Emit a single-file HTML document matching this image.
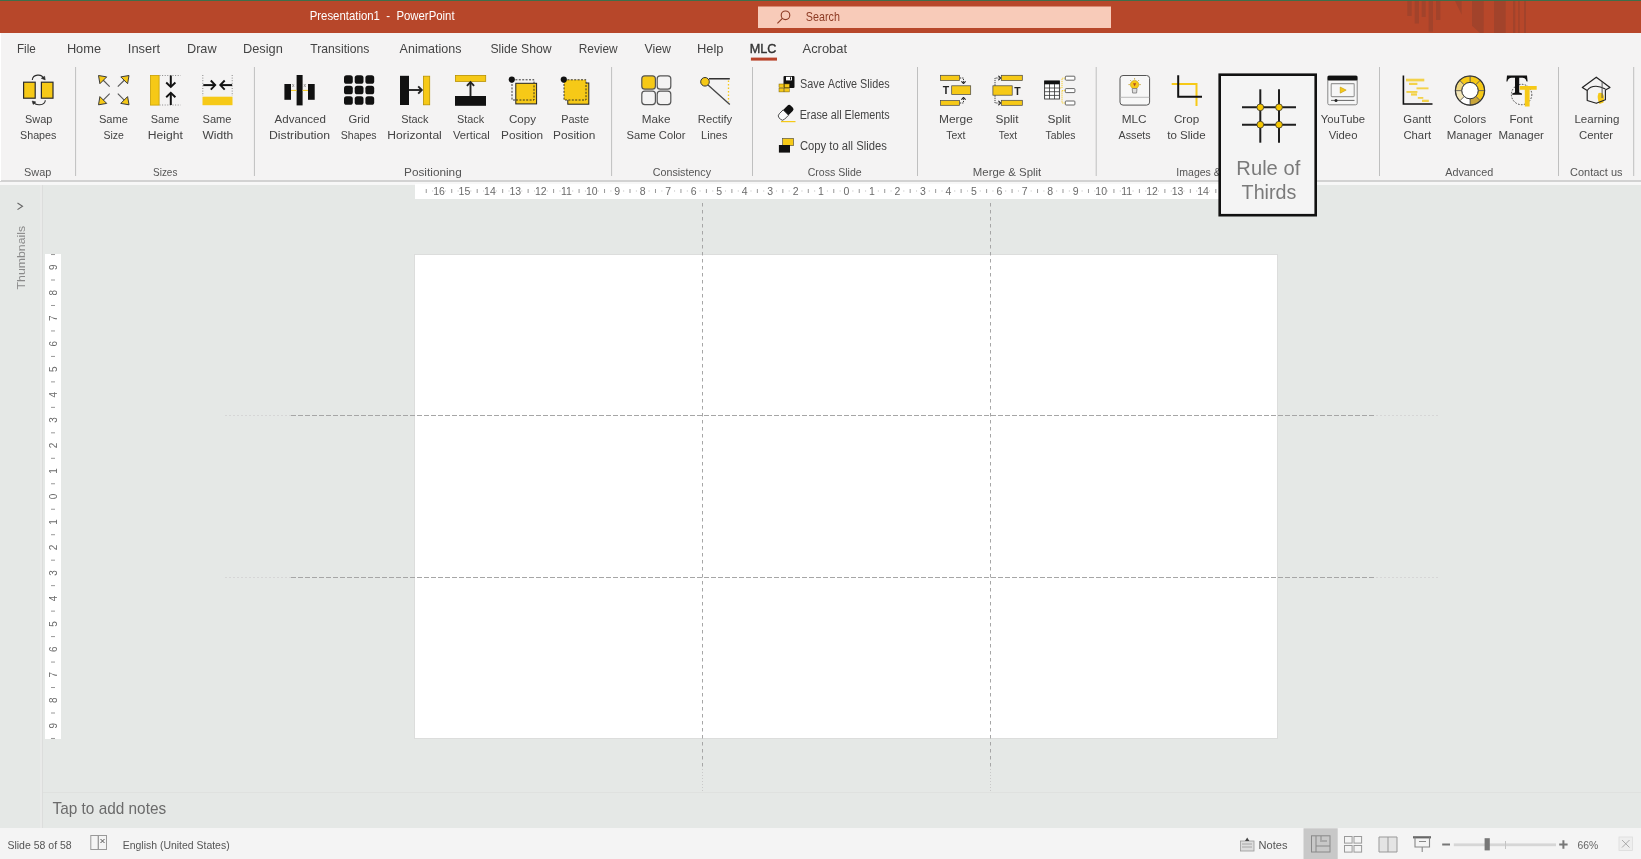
<!DOCTYPE html>
<html><head><meta charset="utf-8"><style>
html,body{margin:0;padding:0;width:1641px;height:859px;overflow:hidden;background:#e6e7e6;}
svg{display:block;font-family:"Liberation Sans",sans-serif;will-change:transform;}
</style></head><body>
<svg width="1641" height="859" viewBox="0 0 1641 859">
<rect x="0" y="0" width="1641" height="1" fill="#3d6e4a"/>
<rect x="0" y="1" width="1641" height="32" fill="#b7472a"/>
<rect x="1407.3" y="1" width="4.4" height="15" fill="#a2432b"/>
<rect x="1414.7" y="1" width="4.3" height="22.5" fill="#a2432b"/>
<rect x="1421.7" y="1" width="4" height="16" fill="#a2432b"/>
<rect x="1428.6" y="1" width="4.4" height="30.6" fill="#a2432b"/>
<rect x="1436" y="1" width="4.4" height="19" fill="#a2432b"/>
<rect x="1494" y="1" width="11.7" height="32" fill="#a2432b"/>
<rect x="1513" y="1" width="2.3" height="32" fill="#a2432b"/>
<rect x="1518.2" y="1" width="1.5" height="32" fill="#a2432b"/>
<rect x="1524" y="1" width="2" height="32" fill="#a2432b"/>
<path d="M1455,1 L1461.7,1 L1461.7,14.7 Z" fill="#a2432b"/>
<path d="M1472,1 L1483.7,1 L1483.7,33 L1480,33 L1472,25.7 Z" fill="#a2432b"/>
<text x="309.69" y="20.30" font-size="12.8" fill="#ffffff" textLength="144.92" lengthAdjust="spacingAndGlyphs" font-family="Liberation Sans" font-weight="normal" >Presentation1&#160;&#160;-&#160;&#160;PowerPoint</text>
<rect x="758" y="6.5" width="353" height="21.5" fill="#f8cbb9"/>
<circle cx="785.5" cy="15.3" r="4.3" fill="none" stroke="#8d3b24" stroke-width="1.1"/>
<line x1="782.4" y1="18.4" x2="777.4" y2="23.4" stroke="#8d3b24" stroke-width="1.2"/>
<text x="805.82" y="20.80" font-size="12.2" fill="#8d3b24" textLength="34.07" lengthAdjust="spacingAndGlyphs" font-family="Liberation Sans" font-weight="normal" >Search</text>
<rect x="0" y="33" width="1641" height="148" fill="#f4f3f3"/>
<rect x="0" y="180" width="1641" height="2" fill="#d2d2d2"/>
<rect x="0" y="33" width="1" height="148" fill="#ffffff"/>
<text x="16.97" y="52.75" font-size="13.3" fill="#444" textLength="18.82" lengthAdjust="spacingAndGlyphs" font-family="Liberation Sans" font-weight="normal" >File</text>
<text x="66.88" y="52.75" font-size="13.3" fill="#444" textLength="34.17" lengthAdjust="spacingAndGlyphs" font-family="Liberation Sans" font-weight="normal" >Home</text>
<text x="127.84" y="52.75" font-size="13.3" fill="#444" textLength="32.24" lengthAdjust="spacingAndGlyphs" font-family="Liberation Sans" font-weight="normal" >Insert</text>
<text x="186.99" y="52.75" font-size="13.3" fill="#444" textLength="29.60" lengthAdjust="spacingAndGlyphs" font-family="Liberation Sans" font-weight="normal" >Draw</text>
<text x="242.98" y="52.75" font-size="13.3" fill="#444" textLength="39.83" lengthAdjust="spacingAndGlyphs" font-family="Liberation Sans" font-weight="normal" >Design</text>
<text x="310.26" y="52.75" font-size="13.3" fill="#444" textLength="59.15" lengthAdjust="spacingAndGlyphs" font-family="Liberation Sans" font-weight="normal" >Transitions</text>
<text x="399.60" y="52.75" font-size="13.3" fill="#444" textLength="61.86" lengthAdjust="spacingAndGlyphs" font-family="Liberation Sans" font-weight="normal" >Animations</text>
<text x="490.45" y="52.75" font-size="13.3" fill="#444" textLength="61.13" lengthAdjust="spacingAndGlyphs" font-family="Liberation Sans" font-weight="normal" >Slide&#160;Show</text>
<text x="578.75" y="52.75" font-size="13.3" fill="#444" textLength="38.94" lengthAdjust="spacingAndGlyphs" font-family="Liberation Sans" font-weight="normal" >Review</text>
<text x="644.54" y="52.75" font-size="13.3" fill="#444" textLength="26.46" lengthAdjust="spacingAndGlyphs" font-family="Liberation Sans" font-weight="normal" >View</text>
<text x="696.97" y="52.75" font-size="13.3" fill="#444" textLength="26.57" lengthAdjust="spacingAndGlyphs" font-family="Liberation Sans" font-weight="normal" >Help</text>
<text x="749.79" y="52.75" font-size="13.3" fill="#333" textLength="26.67" lengthAdjust="spacingAndGlyphs" font-family="Liberation Sans" font-weight="normal" stroke="#333" stroke-width="0.4">MLC</text>
<text x="802.50" y="52.75" font-size="13.3" fill="#444" textLength="44.58" lengthAdjust="spacingAndGlyphs" font-family="Liberation Sans" font-weight="normal" >Acrobat</text>
<rect x="750.9" y="57.6" width="26.1" height="3" fill="#b8432a"/>
<rect x="75.1" y="67" width="1" height="109" fill="#bfbfbf"/>
<rect x="253.9" y="67" width="1" height="109" fill="#bfbfbf"/>
<rect x="611.1" y="67" width="1" height="109" fill="#bfbfbf"/>
<rect x="752.0" y="67" width="1" height="109" fill="#bfbfbf"/>
<rect x="917.0" y="67" width="1" height="109" fill="#bfbfbf"/>
<rect x="1095.7" y="67" width="1" height="109" fill="#bfbfbf"/>
<rect x="1379.0" y="67" width="1" height="109" fill="#bfbfbf"/>
<rect x="1558.0" y="67" width="1" height="109" fill="#bfbfbf"/>
<rect x="1633.2" y="67" width="1" height="109" fill="#bfbfbf"/>
<text x="25.11" y="123.00" font-size="11.7" fill="#444" textLength="27.24" lengthAdjust="spacingAndGlyphs" font-family="Liberation Sans" font-weight="normal" >Swap</text>
<text x="20.02" y="138.70" font-size="11.7" fill="#444" textLength="36.38" lengthAdjust="spacingAndGlyphs" font-family="Liberation Sans" font-weight="normal" >Shapes</text>
<text x="98.90" y="123.00" font-size="11.7" fill="#444" textLength="29.07" lengthAdjust="spacingAndGlyphs" font-family="Liberation Sans" font-weight="normal" >Same</text>
<text x="103.53" y="138.70" font-size="11.7" fill="#444" textLength="20.40" lengthAdjust="spacingAndGlyphs" font-family="Liberation Sans" font-weight="normal" >Size</text>
<text x="150.81" y="123.00" font-size="11.7" fill="#444" textLength="28.66" lengthAdjust="spacingAndGlyphs" font-family="Liberation Sans" font-weight="normal" >Same</text>
<text x="147.73" y="138.70" font-size="11.7" fill="#444" textLength="35.14" lengthAdjust="spacingAndGlyphs" font-family="Liberation Sans" font-weight="normal" >Height</text>
<text x="202.50" y="123.00" font-size="11.7" fill="#444" textLength="28.97" lengthAdjust="spacingAndGlyphs" font-family="Liberation Sans" font-weight="normal" >Same</text>
<text x="202.44" y="138.70" font-size="11.7" fill="#444" textLength="30.80" lengthAdjust="spacingAndGlyphs" font-family="Liberation Sans" font-weight="normal" >Width</text>
<text x="274.60" y="123.00" font-size="11.7" fill="#444" textLength="51.33" lengthAdjust="spacingAndGlyphs" font-family="Liberation Sans" font-weight="normal" >Advanced</text>
<text x="269.02" y="138.70" font-size="11.7" fill="#444" textLength="61.14" lengthAdjust="spacingAndGlyphs" font-family="Liberation Sans" font-weight="normal" >Distribution</text>
<text x="348.44" y="123.00" font-size="11.7" fill="#444" textLength="21.23" lengthAdjust="spacingAndGlyphs" font-family="Liberation Sans" font-weight="normal" >Grid</text>
<text x="340.83" y="138.70" font-size="11.7" fill="#444" textLength="35.76" lengthAdjust="spacingAndGlyphs" font-family="Liberation Sans" font-weight="normal" >Shapes</text>
<text x="401.21" y="123.00" font-size="11.7" fill="#444" textLength="27.30" lengthAdjust="spacingAndGlyphs" font-family="Liberation Sans" font-weight="normal" >Stack</text>
<text x="387.33" y="138.70" font-size="11.7" fill="#444" textLength="54.48" lengthAdjust="spacingAndGlyphs" font-family="Liberation Sans" font-weight="normal" >Horizontal</text>
<text x="457.11" y="123.00" font-size="11.7" fill="#444" textLength="27.10" lengthAdjust="spacingAndGlyphs" font-family="Liberation Sans" font-weight="normal" >Stack</text>
<text x="452.94" y="138.70" font-size="11.7" fill="#444" textLength="36.84" lengthAdjust="spacingAndGlyphs" font-family="Liberation Sans" font-weight="normal" >Vertical</text>
<text x="509.02" y="123.00" font-size="11.7" fill="#444" textLength="26.97" lengthAdjust="spacingAndGlyphs" font-family="Liberation Sans" font-weight="normal" >Copy</text>
<text x="501.05" y="138.70" font-size="11.7" fill="#444" textLength="42.09" lengthAdjust="spacingAndGlyphs" font-family="Liberation Sans" font-weight="normal" >Position</text>
<text x="561.13" y="123.00" font-size="11.7" fill="#444" textLength="27.83" lengthAdjust="spacingAndGlyphs" font-family="Liberation Sans" font-weight="normal" >Paste</text>
<text x="553.05" y="138.70" font-size="11.7" fill="#444" textLength="42.19" lengthAdjust="spacingAndGlyphs" font-family="Liberation Sans" font-weight="normal" >Position</text>
<text x="641.86" y="123.00" font-size="11.7" fill="#444" textLength="28.61" lengthAdjust="spacingAndGlyphs" font-family="Liberation Sans" font-weight="normal" >Make</text>
<text x="626.50" y="138.70" font-size="11.7" fill="#444" textLength="59.07" lengthAdjust="spacingAndGlyphs" font-family="Liberation Sans" font-weight="normal" >Same&#160;Color</text>
<text x="697.80" y="123.00" font-size="11.7" fill="#444" textLength="34.41" lengthAdjust="spacingAndGlyphs" font-family="Liberation Sans" font-weight="normal" >Rectify</text>
<text x="701.12" y="138.70" font-size="11.7" fill="#444" textLength="26.27" lengthAdjust="spacingAndGlyphs" font-family="Liberation Sans" font-weight="normal" >Lines</text>
<text x="939.05" y="123.00" font-size="11.7" fill="#444" textLength="33.83" lengthAdjust="spacingAndGlyphs" font-family="Liberation Sans" font-weight="normal" >Merge</text>
<text x="946.29" y="138.70" font-size="11.7" fill="#444" textLength="19.20" lengthAdjust="spacingAndGlyphs" font-family="Liberation Sans" font-weight="normal" >Text</text>
<text x="995.47" y="123.00" font-size="11.7" fill="#444" textLength="23.10" lengthAdjust="spacingAndGlyphs" font-family="Liberation Sans" font-weight="normal" >Split</text>
<text x="998.80" y="138.70" font-size="11.7" fill="#444" textLength="18.29" lengthAdjust="spacingAndGlyphs" font-family="Liberation Sans" font-weight="normal" >Text</text>
<text x="1047.46" y="123.00" font-size="11.7" fill="#444" textLength="23.20" lengthAdjust="spacingAndGlyphs" font-family="Liberation Sans" font-weight="normal" >Split</text>
<text x="1045.49" y="138.70" font-size="11.7" fill="#444" textLength="29.88" lengthAdjust="spacingAndGlyphs" font-family="Liberation Sans" font-weight="normal" >Tables</text>
<text x="1121.76" y="123.00" font-size="11.7" fill="#444" textLength="24.87" lengthAdjust="spacingAndGlyphs" font-family="Liberation Sans" font-weight="normal" >MLC</text>
<text x="1118.60" y="138.70" font-size="11.7" fill="#444" textLength="32.09" lengthAdjust="spacingAndGlyphs" font-family="Liberation Sans" font-weight="normal" >Assets</text>
<text x="1173.92" y="123.00" font-size="11.7" fill="#444" textLength="25.28" lengthAdjust="spacingAndGlyphs" font-family="Liberation Sans" font-weight="normal" >Crop</text>
<text x="1167.23" y="138.70" font-size="11.7" fill="#444" textLength="38.44" lengthAdjust="spacingAndGlyphs" font-family="Liberation Sans" font-weight="normal" >to&#160;Slide</text>
<text x="1320.77" y="123.00" font-size="11.7" fill="#444" textLength="44.27" lengthAdjust="spacingAndGlyphs" font-family="Liberation Sans" font-weight="normal" >YouTube</text>
<text x="1328.74" y="138.70" font-size="11.7" fill="#444" textLength="28.71" lengthAdjust="spacingAndGlyphs" font-family="Liberation Sans" font-weight="normal" >Video</text>
<text x="1403.33" y="123.00" font-size="11.7" fill="#444" textLength="27.73" lengthAdjust="spacingAndGlyphs" font-family="Liberation Sans" font-weight="normal" >Gantt</text>
<text x="1403.44" y="138.70" font-size="11.7" fill="#444" textLength="27.63" lengthAdjust="spacingAndGlyphs" font-family="Liberation Sans" font-weight="normal" >Chart</text>
<text x="1453.43" y="123.00" font-size="11.7" fill="#444" textLength="32.76" lengthAdjust="spacingAndGlyphs" font-family="Liberation Sans" font-weight="normal" >Colors</text>
<text x="1446.68" y="138.70" font-size="11.7" fill="#444" textLength="45.46" lengthAdjust="spacingAndGlyphs" font-family="Liberation Sans" font-weight="normal" >Manager</text>
<text x="1509.47" y="123.00" font-size="11.7" fill="#444" textLength="23.30" lengthAdjust="spacingAndGlyphs" font-family="Liberation Sans" font-weight="normal" >Font</text>
<text x="1498.38" y="138.70" font-size="11.7" fill="#444" textLength="45.56" lengthAdjust="spacingAndGlyphs" font-family="Liberation Sans" font-weight="normal" >Manager</text>
<text x="1574.38" y="123.00" font-size="11.7" fill="#444" textLength="44.94" lengthAdjust="spacingAndGlyphs" font-family="Liberation Sans" font-weight="normal" >Learning</text>
<text x="1579.03" y="138.70" font-size="11.7" fill="#444" textLength="34.10" lengthAdjust="spacingAndGlyphs" font-family="Liberation Sans" font-weight="normal" >Center</text>
<text x="800.01" y="88.30" font-size="12" fill="#444" textLength="89.59" lengthAdjust="spacingAndGlyphs" font-family="Liberation Sans" font-weight="normal" >Save&#160;Active&#160;Slides</text>
<text x="799.64" y="119.40" font-size="12" fill="#444" textLength="89.96" lengthAdjust="spacingAndGlyphs" font-family="Liberation Sans" font-weight="normal" >Erase&#160;all&#160;Elements</text>
<text x="799.94" y="150.00" font-size="12" fill="#444" textLength="86.87" lengthAdjust="spacingAndGlyphs" font-family="Liberation Sans" font-weight="normal" >Copy&#160;to&#160;all&#160;Slides</text>
<text x="24.11" y="176.00" font-size="11.3" fill="#555" textLength="27.24" lengthAdjust="spacingAndGlyphs" font-family="Liberation Sans" font-weight="normal" >Swap</text>
<text x="153.05" y="176.00" font-size="11.3" fill="#555" textLength="24.30" lengthAdjust="spacingAndGlyphs" font-family="Liberation Sans" font-weight="normal" >Sizes</text>
<text x="404.06" y="176.00" font-size="11.3" fill="#555" textLength="57.68" lengthAdjust="spacingAndGlyphs" font-family="Liberation Sans" font-weight="normal" >Positioning</text>
<text x="652.77" y="176.00" font-size="11.3" fill="#555" textLength="58.25" lengthAdjust="spacingAndGlyphs" font-family="Liberation Sans" font-weight="normal" >Consistency</text>
<text x="807.67" y="176.00" font-size="11.3" fill="#555" textLength="54.08" lengthAdjust="spacingAndGlyphs" font-family="Liberation Sans" font-weight="normal" >Cross&#160;Slide</text>
<text x="972.89" y="176.00" font-size="11.3" fill="#555" textLength="68.40" lengthAdjust="spacingAndGlyphs" font-family="Liberation Sans" font-weight="normal" >Merge&#160;&amp;&#160;Split</text>
<text x="1445.20" y="176.00" font-size="11.3" fill="#555" textLength="48.08" lengthAdjust="spacingAndGlyphs" font-family="Liberation Sans" font-weight="normal" >Advanced</text>
<text x="1570.05" y="176.00" font-size="11.3" fill="#555" textLength="52.44" lengthAdjust="spacingAndGlyphs" font-family="Liberation Sans" font-weight="normal" >Contact&#160;us</text>
<text x="1176.35" y="175.90" font-size="11.3" fill="#555" textLength="74.09" lengthAdjust="spacingAndGlyphs" font-family="Liberation Sans" font-weight="normal" >Images&#160;&amp;&#160;Video</text>
<rect x="23.6" y="82.2" width="11.6" height="16" fill="#f6c917" stroke="#2b2b2b" stroke-width="1.2"/>
<rect x="41.4" y="82.2" width="11.6" height="16" fill="#f6c917" stroke="#2b2b2b" stroke-width="1.2"/>
<path d="M32.3,80 C32.8,74 42,73.5 43.5,78.6" fill="none" stroke="#2b2b2b" stroke-width="1.1"/>
<path d="M41.3,78.3 L45.2,79.9 L44.6,76.3 Z" fill="#2b2b2b" stroke="#2b2b2b" stroke-width="0.6" stroke-linejoin="round"/>
<path d="M45.3,100.2 C45,106 35,106 33.6,101.6" fill="none" stroke="#2b2b2b" stroke-width="1.1"/>
<path d="M35.8,102 L32.2,101 L33.2,104.4 Z" fill="#2b2b2b" stroke="#2b2b2b" stroke-width="0.6" stroke-linejoin="round"/>
<line x1="102.5" y1="79.5" x2="109.7" y2="86.7" stroke="#555" stroke-width="1.1"/>
<path d="M98.5,75.5 L106.7,76.9 L99.9,83.7 Z" fill="#f6c917" stroke="#3a3a3a" stroke-width="1" stroke-linejoin="round"/>
<line x1="125" y1="79.5" x2="117.8" y2="86.7" stroke="#555" stroke-width="1.1"/>
<path d="M129,75.5 L120.8,76.9 L127.6,83.7 Z" fill="#f6c917" stroke="#3a3a3a" stroke-width="1" stroke-linejoin="round"/>
<line x1="102.5" y1="100.8" x2="109.7" y2="93.6" stroke="#555" stroke-width="1.1"/>
<path d="M98.5,104.8 L106.7,103.39999999999999 L99.9,96.6 Z" fill="#f6c917" stroke="#3a3a3a" stroke-width="1" stroke-linejoin="round"/>
<line x1="125" y1="100.8" x2="117.8" y2="93.6" stroke="#555" stroke-width="1.1"/>
<path d="M129,104.8 L120.8,103.39999999999999 L127.6,96.6 Z" fill="#f6c917" stroke="#3a3a3a" stroke-width="1" stroke-linejoin="round"/>
<rect x="150.5" y="75.5" width="8.6" height="29.6" fill="#f6c917" stroke="#c9a000" stroke-width="0.8"/>
<line x1="159.5" y1="75.5" x2="180.6" y2="75.5" stroke="#888" stroke-width="1" stroke-dasharray="1,1.6"/>
<line x1="159.5" y1="105" x2="180.6" y2="105" stroke="#888" stroke-width="1" stroke-dasharray="1,1.6"/>
<line x1="170.8" y1="75.5" x2="170.8" y2="86" stroke="#111" stroke-width="2"/>
<path d="M166.20,82.50 L170.8,86.9 L175.40,82.50" fill="none" stroke="#111" stroke-width="1.9" stroke-linejoin="miter"/>
<line x1="170.8" y1="105" x2="170.8" y2="93.5" stroke="#111" stroke-width="2"/>
<path d="M175.40,97.30 L170.8,92.9 L166.20,97.30" fill="none" stroke="#111" stroke-width="1.9" stroke-linejoin="miter"/>
<line x1="202.8" y1="75" x2="202.8" y2="96" stroke="#888" stroke-width="1" stroke-dasharray="1,1.6"/>
<line x1="232.2" y1="75" x2="232.2" y2="96" stroke="#888" stroke-width="1" stroke-dasharray="1,1.6"/>
<line x1="203.3" y1="85.1" x2="214.5" y2="85.1" stroke="#111" stroke-width="2"/>
<path d="M210.80,89.70 L215.2,85.1 L210.80,80.50" fill="none" stroke="#111" stroke-width="1.9" stroke-linejoin="miter"/>
<line x1="232.1" y1="85.1" x2="221" y2="85.1" stroke="#111" stroke-width="2"/>
<path d="M224.70,80.50 L220.3,85.1 L224.70,89.70" fill="none" stroke="#111" stroke-width="1.9" stroke-linejoin="miter"/>
<rect x="202.5" y="96.7" width="30" height="8.5" fill="#f6c917"/>
<rect x="284.4" y="84" width="6.6" height="15.8" fill="#111"/>
<rect x="296.6" y="75" width="6" height="30.4" fill="#111"/>
<rect x="308" y="84" width="6.7" height="15.8" fill="#111"/>
<line x1="291" y1="90.4" x2="296.6" y2="90.4" stroke="#f6c917" stroke-width="1"/>
<line x1="302.6" y1="90.4" x2="308" y2="90.4" stroke="#f6c917" stroke-width="1"/>
<text x="292" y="87" font-size="5" fill="#666" font-family="Liberation Sans">x</text><text x="303.5" y="87" font-size="5" fill="#666" font-family="Liberation Sans">x</text>
<rect x="344.0" y="75.2" width="8.8" height="8.6" rx="2.6" fill="#111"/>
<rect x="344.0" y="85.7" width="8.8" height="8.6" rx="2.6" fill="#111"/>
<rect x="344.0" y="96.2" width="8.8" height="8.6" rx="2.6" fill="#111"/>
<rect x="354.7" y="75.2" width="8.8" height="8.6" rx="2.6" fill="#111"/>
<rect x="354.7" y="85.7" width="8.8" height="8.6" rx="2.6" fill="#111"/>
<rect x="354.7" y="96.2" width="8.8" height="8.6" rx="2.6" fill="#111"/>
<rect x="365.4" y="75.2" width="8.8" height="8.6" rx="2.6" fill="#111"/>
<rect x="365.4" y="85.7" width="8.8" height="8.6" rx="2.6" fill="#111"/>
<rect x="365.4" y="96.2" width="8.8" height="8.6" rx="2.6" fill="#111"/>
<rect x="400" y="75.8" width="9" height="29.2" fill="#111"/>
<line x1="409" y1="90" x2="421" y2="90" stroke="#222" stroke-width="1.9"/>
<path d="M418.20,93.60 L421.8,90 L418.20,86.40" fill="none" stroke="#222" stroke-width="1.9" stroke-linejoin="miter"/>
<rect x="423.4" y="76.2" width="6.3" height="28.6" fill="#f6c917" stroke="#b89200" stroke-width="0.8"/>
<rect x="455.5" y="75.4" width="30.2" height="6" fill="#f6c917" stroke="#b89200" stroke-width="0.8"/>
<line x1="470.5" y1="96" x2="470.5" y2="83" stroke="#222" stroke-width="1.9"/>
<path d="M474.10,85.80 L470.5,82.2 L466.90,85.80" fill="none" stroke="#222" stroke-width="1.9" stroke-linejoin="miter"/>
<rect x="455" y="96" width="31" height="9.8" fill="#111"/>
<rect x="512" y="79.8" width="22" height="20.2" fill="none" stroke="#222" stroke-width="0.9" stroke-dasharray="2,1.4"/>
<rect x="515.8" y="83.3" width="20.8" height="20.6" fill="#f6c917" stroke="#222" stroke-width="1"/>
<path d="M516,100 L534,100 L534,84" fill="none" stroke="#222" stroke-width="0.9" stroke-dasharray="2,1.4"/>
<circle cx="511.8" cy="79.6" r="3.1" fill="#111"/>
<rect x="567.8" y="83" width="21" height="21.2" fill="#f6c917" stroke="#222" stroke-width="1"/>
<rect x="564" y="79.8" width="22" height="20.2" fill="#f6c917" stroke="#222" stroke-width="0.9" stroke-dasharray="2,1.4"/>
<circle cx="563.8" cy="79.6" r="3.1" fill="#111"/>
<rect x="641.8" y="75.8" width="13.6" height="13.4" rx="3" fill="#f6c917" stroke="#555" stroke-width="1.2"/>
<rect x="657.2" y="75.8" width="13.6" height="13.4" rx="3" fill="none" stroke="#555" stroke-width="1.2"/>
<rect x="641.8" y="91.2" width="13.6" height="13.4" rx="3" fill="none" stroke="#555" stroke-width="1.2"/>
<rect x="657.2" y="91.2" width="13.6" height="13.4" rx="3" fill="none" stroke="#555" stroke-width="1.2"/>
<line x1="709" y1="78.8" x2="729.8" y2="78.8" stroke="#111" stroke-width="1.3"/>
<line x1="708" y1="85" x2="729.8" y2="104.4" stroke="#444" stroke-width="1.3"/>
<line x1="728.5" y1="80.5" x2="728.5" y2="102" stroke="#f6c917" stroke-width="1.3" stroke-dasharray="1.5,2"/>
<circle cx="705" cy="81.8" r="4.3" fill="#f6c917" stroke="#333" stroke-width="1"/>
<rect x="783.5" y="76" width="11" height="12" rx="1" fill="#111"/>
<rect x="786" y="76.8" width="6" height="3.6" fill="#fff"/>
<rect x="790" y="77.3" width="1" height="2.4" fill="#111"/>
<rect x="779" y="84" width="4.8" height="3.6" fill="#f6c917" stroke="#7a6000" stroke-width="0.5"/>
<rect x="784.5" y="84" width="4.8" height="3.6" fill="#f6c917" stroke="#7a6000" stroke-width="0.5"/>
<rect x="779" y="88.3" width="4.8" height="3.6" fill="#f6c917" stroke="#7a6000" stroke-width="0.5"/>
<rect x="784.5" y="88.3" width="4.8" height="3.6" fill="#f6c917" stroke="#7a6000" stroke-width="0.5"/>
<g transform="translate(785.8,112.6) rotate(-45)"><path d="M0,-3.8 L6,-3.8 Q8.5,-3.8 8.5,-1.3 L8.5,1.3 Q8.5,3.8 6,3.8 L0,3.8 Z" fill="#111"/><path d="M0,-3.8 L-5.5,-3.8 Q-8.5,-3.8 -8.5,-0.8 L-8.5,0.8 Q-8.5,3.8 -5.5,3.8 L0,3.8 Z" fill="#fafafa" stroke="#444" stroke-width="0.9"/></g>
<rect x="781" y="121" width="14.5" height="1.2" fill="#f6c917"/>
<rect x="782.6" y="138.3" width="11" height="7.4" fill="#f6c917" stroke="#444" stroke-width="0.6"/>
<rect x="778.9" y="145" width="11.1" height="7.6" fill="#111"/>
<rect x="940.6" y="75.3" width="19" height="5.2" fill="#f6c917" stroke="#444" stroke-width="0.7"/>
<rect x="940.6" y="100.5" width="19" height="4.8" fill="#f6c917" stroke="#444" stroke-width="0.7"/>
<rect x="951.7" y="85.8" width="19" height="8.6" fill="#f6c917" stroke="#444" stroke-width="0.7"/>
<path d="M960,78 L963.5,78 L963.5,82.5" fill="none" stroke="#222" stroke-width="0.9" stroke-dasharray="1.2,1"/>
<path d="M961.70,81.70 L963.5,83.5 L965.30,81.70" fill="none" stroke="#222" stroke-width="1.1" stroke-linecap="round" stroke-linejoin="round"/>
<path d="M960,103 L963.5,103 L963.5,98.5" fill="none" stroke="#222" stroke-width="0.9" stroke-dasharray="1.2,1"/>
<path d="M965.30,99.30 L963.5,97.5 L961.70,99.30" fill="none" stroke="#222" stroke-width="1.1" stroke-linecap="round" stroke-linejoin="round"/>
<text x="942.8" y="94.3" font-size="10.5" font-weight="bold" fill="#222" font-family="Liberation Sans">T</text>
<rect x="1001.3" y="75.3" width="21" height="5.2" fill="#f6c917" stroke="#444" stroke-width="0.7"/>
<rect x="1001.3" y="100.3" width="21" height="5" fill="#f6c917" stroke="#444" stroke-width="0.7"/>
<rect x="992.9" y="85.8" width="19.3" height="9.4" fill="#f6c917" stroke="#444" stroke-width="0.7"/>
<path d="M995,85.5 L995,78 L999.5,78" fill="none" stroke="#222" stroke-width="0.9" stroke-dasharray="1.2,1"/>
<path d="M998.70,79.80 L1000.5,78 L998.70,76.20" fill="none" stroke="#222" stroke-width="1.1" stroke-linecap="round" stroke-linejoin="round"/>
<path d="M995,95.5 L995,103 L999.5,103" fill="none" stroke="#222" stroke-width="0.9" stroke-dasharray="1.2,1"/>
<path d="M998.70,104.80 L1000.5,103 L998.70,101.20" fill="none" stroke="#222" stroke-width="1.1" stroke-linecap="round" stroke-linejoin="round"/>
<text x="1014.3" y="94.8" font-size="10.5" font-weight="bold" fill="#222" font-family="Liberation Sans">T</text>
<rect x="1044.6" y="81" width="14.8" height="18" fill="#fff" stroke="#333" stroke-width="0.9"/>
<rect x="1044.3" y="80.7" width="15.4" height="3.6" fill="#111"/>
<line x1="1044.6" y1="88.0" x2="1059.4" y2="88.0" stroke="#333" stroke-width="0.8"/>
<line x1="1044.6" y1="91.7" x2="1059.4" y2="91.7" stroke="#333" stroke-width="0.8"/>
<line x1="1044.6" y1="95.4" x2="1059.4" y2="95.4" stroke="#333" stroke-width="0.8"/>
<line x1="1049.5" y1="84" x2="1049.5" y2="99" stroke="#333" stroke-width="0.8"/>
<line x1="1054.5" y1="84" x2="1054.5" y2="99" stroke="#333" stroke-width="0.8"/>
<rect x="1065.3" y="76.2" width="9.6" height="4" rx="0.8" fill="#fff" stroke="#555" stroke-width="0.9"/>
<rect x="1065.3" y="88.6" width="9.6" height="4" rx="0.8" fill="#fff" stroke="#555" stroke-width="0.9"/>
<rect x="1065.3" y="101" width="9.6" height="4" rx="0.8" fill="#fff" stroke="#555" stroke-width="0.9"/>
<path d="M1060,88 L1062,88 L1062,78.2 L1065,78.2 M1062,90.6 L1065,90.6 M1062,90.6 L1062,103 L1065,103" fill="none" stroke="#f6c917" stroke-width="0.9" stroke-dasharray="1.2,0.8"/>
<rect x="1120" y="75.5" width="29.6" height="29.6" rx="3" fill="#f7f7f7" stroke="#555" stroke-width="1"/>
<line x1="1120.5" y1="97.3" x2="1149.3" y2="97.3" stroke="#bbb" stroke-width="1"/>
<circle cx="1134.6" cy="84.6" r="4.2" fill="#f6c917" stroke="#b88f00" stroke-width="0.5"/>
<path d="M1132.2,88.5 L1137,88.5 L1136.6,93 L1132.6,93 Z" fill="#ddd" stroke="#777" stroke-width="0.8"/>
<path d="M1134.6,86.5 L1133,83.2 L1136.2,83.2 Z" fill="#b04a20"/>
<line x1="1134.6" y1="78.2" x2="1134.6" y2="79.5" stroke="#b88f00" stroke-width="0.8"/>
<line x1="1128.5" y1="84.6" x2="1129.8" y2="84.6" stroke="#b88f00" stroke-width="0.8"/>
<line x1="1139.4" y1="84.6" x2="1140.7" y2="84.6" stroke="#b88f00" stroke-width="0.8"/>
<line x1="1130.3" y1="80.2" x2="1131.2" y2="81.1" stroke="#b88f00" stroke-width="0.8"/>
<line x1="1138.9" y1="80.2" x2="1138" y2="81.1" stroke="#b88f00" stroke-width="0.8"/>
<path d="M1171.7,84 L1196.5,84 L1196.5,106" fill="none" stroke="#f6c917" stroke-width="2"/>
<path d="M1178.2,75.3 L1178.2,96.7 L1202,96.7" fill="none" stroke="#111" stroke-width="2"/>
<rect x="1327.8" y="76" width="29.4" height="28.8" rx="1.5" fill="#f6f6f6" stroke="#888" stroke-width="1"/>
<rect x="1327.6" y="75.7" width="29.8" height="4.9" rx="1" fill="#111"/>
<rect x="1331.2" y="83.6" width="23" height="13" rx="0.8" fill="#f6f6f6" stroke="#999" stroke-width="1.1"/>
<path d="M1340.2,87 L1346.2,90.1 L1340.2,93.2 Z" fill="#f6c917" stroke="#b88f00" stroke-width="0.5"/>
<line x1="1331" y1="100.4" x2="1354.5" y2="100.4" stroke="#666" stroke-width="1"/>
<circle cx="1336" cy="100.4" r="1.5" fill="#222"/>
<rect x="1406" y="78.7" width="18.3" height="2.7" fill="#f3d24a"/>
<rect x="1409" y="82.8" width="8.4" height="2.2" fill="#f3d24a"/>
<rect x="1416.5" y="87.4" width="12" height="1.9" fill="#f3d24a"/>
<rect x="1406.4" y="91" width="11" height="1.9" fill="#f3d24a"/>
<rect x="1411" y="93.3" width="6" height="2.3" fill="#f3d24a"/>
<rect x="1417.8" y="97" width="5.5" height="1.8" fill="#f3d24a"/>
<rect x="1422" y="99.7" width="6.8" height="2.3" fill="#f3d24a"/>
<path d="M1403.4,75.5 L1403.4,104 L1432.5,104" fill="none" stroke="#111" stroke-width="1.6"/>
<path d="M1470.00,76.00 A14.6,14.6 0 0 1 1480.32,80.28 L1475.80,84.80 A8.2,8.2 0 0 0 1470.00,82.40 Z" fill="#f6c917" stroke="#555" stroke-width="0.7"/>
<path d="M1480.32,80.28 A14.6,14.6 0 0 1 1484.60,90.60 L1478.20,90.60 A8.2,8.2 0 0 0 1475.80,84.80 Z" fill="#f6c917" stroke="#555" stroke-width="0.7"/>
<path d="M1484.60,90.60 A14.6,14.6 0 0 1 1480.32,100.92 L1475.80,96.40 A8.2,8.2 0 0 0 1478.20,90.60 Z" fill="#f6c917" stroke="#555" stroke-width="0.7"/>
<path d="M1480.32,100.92 A14.6,14.6 0 0 1 1470.00,105.20 L1470.00,98.80 A8.2,8.2 0 0 0 1475.80,96.40 Z" fill="#c9a53a" stroke="#555" stroke-width="0.7"/>
<path d="M1470.00,105.20 A14.6,14.6 0 0 1 1459.68,100.92 L1464.20,96.40 A8.2,8.2 0 0 0 1470.00,98.80 Z" fill="#ffffff" stroke="#555" stroke-width="0.7"/>
<path d="M1459.68,100.92 A14.6,14.6 0 0 1 1455.40,90.60 L1461.80,90.60 A8.2,8.2 0 0 0 1464.20,96.40 Z" fill="#f3e6b8" stroke="#555" stroke-width="0.7"/>
<path d="M1455.40,90.60 A14.6,14.6 0 0 1 1459.68,80.28 L1464.20,84.80 A8.2,8.2 0 0 0 1461.80,90.60 Z" fill="#efd77a" stroke="#555" stroke-width="0.7"/>
<path d="M1459.68,80.28 A14.6,14.6 0 0 1 1470.00,76.00 L1470.00,82.40 A8.2,8.2 0 0 0 1464.20,84.80 Z" fill="#f6c917" stroke="#555" stroke-width="0.7"/>
<circle cx="1470" cy="90.6" r="14.6" fill="none" stroke="#333" stroke-width="1.2"/>
<circle cx="1470" cy="90.6" r="8.2" fill="#fff" stroke="#333" stroke-width="1"/>
<circle cx="1521.6" cy="94.5" r="10.2" fill="none" stroke="#333" stroke-width="0.9" stroke-dasharray="1.6,1.4"/>
<path d="M1507,75.5 L1527,75.5 L1527.6,81.5 L1526.6,81.5 Q1525.8,77.8 1522.5,77.8 L1519.2,77.8 L1519.2,92.6 L1522,93.6 L1522,94.7 L1512.2,94.7 L1512.2,93.6 L1515,92.6 L1515,77.8 L1511.6,77.8 Q1508.3,77.8 1507.4,81.5 L1506.4,81.5 Z" fill="#111"/>
<path d="M1519.8,86 L1536.7,86 L1536.7,89.8 L1529.6,89.8 L1529.6,106.6 L1524.8,106.6 L1524.8,89.8 L1519.8,89.8 Z" fill="#f6c917"/>
<path d="M1598.5,93 Q1603.5,91.5 1604,97 L1603.5,102.5 L1599.5,104 Q1596.5,98 1598.5,93 Z" fill="#f6c917"/>
<path d="M1596.3,77.2 L1610,87.5 L1605.4,90 L1605.4,99.8 L1596.3,103.3 L1587.2,100.5 L1587.2,90.5 L1582.3,87.5 Z" fill="none" stroke="#222" stroke-width="1.2" stroke-linejoin="round"/>
<path d="M1587.2,90.5 Q1590,86.3 1596,86.3 Q1600,86.3 1605.4,89" fill="none" stroke="#222" stroke-width="1.1"/>
<line x1="1602.1" y1="82.1" x2="1602.1" y2="98" stroke="#555" stroke-width="1"/>
<rect x="0" y="182" width="1641" height="3" fill="#f7f7f7"/>
<rect x="0" y="185" width="1641" height="643" fill="#e5e8e6"/>
<rect x="40" y="185" width="2" height="643" fill="#e9eae9"/>
<rect x="42" y="185" width="1" height="643" fill="#dcdddc"/>
<rect x="43" y="792" width="1598" height="1" fill="#dfe1df"/>
<path d="M17.5,203 L22.5,206.3 L17.5,209.6" fill="none" stroke="#666" stroke-width="1.1"/>
<text transform="translate(25.2,289.4) rotate(-90)" x="0" y="0" font-size="11.2" fill="#8a8a8a" font-family="Liberation Sans" textLength="63.5" lengthAdjust="spacingAndGlyphs">Thumbnails</text>
<rect x="415" y="184" width="862" height="15" fill="#ffffff"/>
<text x="438.98" y="195" font-size="10.5" fill="#6a6a6a" text-anchor="middle" font-family="Liberation Sans">16</text>
<text x="464.45" y="195" font-size="10.5" fill="#6a6a6a" text-anchor="middle" font-family="Liberation Sans">15</text>
<text x="489.92" y="195" font-size="10.5" fill="#6a6a6a" text-anchor="middle" font-family="Liberation Sans">14</text>
<text x="515.39" y="195" font-size="10.5" fill="#6a6a6a" text-anchor="middle" font-family="Liberation Sans">13</text>
<text x="540.86" y="195" font-size="10.5" fill="#6a6a6a" text-anchor="middle" font-family="Liberation Sans">12</text>
<text x="566.33" y="195" font-size="10.5" fill="#6a6a6a" text-anchor="middle" font-family="Liberation Sans">11</text>
<text x="591.80" y="195" font-size="10.5" fill="#6a6a6a" text-anchor="middle" font-family="Liberation Sans">10</text>
<text x="617.27" y="195" font-size="10.5" fill="#6a6a6a" text-anchor="middle" font-family="Liberation Sans">9</text>
<text x="642.74" y="195" font-size="10.5" fill="#6a6a6a" text-anchor="middle" font-family="Liberation Sans">8</text>
<text x="668.21" y="195" font-size="10.5" fill="#6a6a6a" text-anchor="middle" font-family="Liberation Sans">7</text>
<text x="693.68" y="195" font-size="10.5" fill="#6a6a6a" text-anchor="middle" font-family="Liberation Sans">6</text>
<text x="719.15" y="195" font-size="10.5" fill="#6a6a6a" text-anchor="middle" font-family="Liberation Sans">5</text>
<text x="744.62" y="195" font-size="10.5" fill="#6a6a6a" text-anchor="middle" font-family="Liberation Sans">4</text>
<text x="770.09" y="195" font-size="10.5" fill="#6a6a6a" text-anchor="middle" font-family="Liberation Sans">3</text>
<text x="795.56" y="195" font-size="10.5" fill="#6a6a6a" text-anchor="middle" font-family="Liberation Sans">2</text>
<text x="821.03" y="195" font-size="10.5" fill="#6a6a6a" text-anchor="middle" font-family="Liberation Sans">1</text>
<text x="846.50" y="195" font-size="10.5" fill="#6a6a6a" text-anchor="middle" font-family="Liberation Sans">0</text>
<text x="871.97" y="195" font-size="10.5" fill="#6a6a6a" text-anchor="middle" font-family="Liberation Sans">1</text>
<text x="897.44" y="195" font-size="10.5" fill="#6a6a6a" text-anchor="middle" font-family="Liberation Sans">2</text>
<text x="922.91" y="195" font-size="10.5" fill="#6a6a6a" text-anchor="middle" font-family="Liberation Sans">3</text>
<text x="948.38" y="195" font-size="10.5" fill="#6a6a6a" text-anchor="middle" font-family="Liberation Sans">4</text>
<text x="973.85" y="195" font-size="10.5" fill="#6a6a6a" text-anchor="middle" font-family="Liberation Sans">5</text>
<text x="999.32" y="195" font-size="10.5" fill="#6a6a6a" text-anchor="middle" font-family="Liberation Sans">6</text>
<text x="1024.79" y="195" font-size="10.5" fill="#6a6a6a" text-anchor="middle" font-family="Liberation Sans">7</text>
<text x="1050.26" y="195" font-size="10.5" fill="#6a6a6a" text-anchor="middle" font-family="Liberation Sans">8</text>
<text x="1075.73" y="195" font-size="10.5" fill="#6a6a6a" text-anchor="middle" font-family="Liberation Sans">9</text>
<text x="1101.20" y="195" font-size="10.5" fill="#6a6a6a" text-anchor="middle" font-family="Liberation Sans">10</text>
<text x="1126.67" y="195" font-size="10.5" fill="#6a6a6a" text-anchor="middle" font-family="Liberation Sans">11</text>
<text x="1152.14" y="195" font-size="10.5" fill="#6a6a6a" text-anchor="middle" font-family="Liberation Sans">12</text>
<text x="1177.61" y="195" font-size="10.5" fill="#6a6a6a" text-anchor="middle" font-family="Liberation Sans">13</text>
<text x="1203.08" y="195" font-size="10.5" fill="#6a6a6a" text-anchor="middle" font-family="Liberation Sans">14</text>
<rect x="425.75" y="189" width="1" height="4" fill="#999"/>
<rect x="451.22" y="189" width="1" height="4" fill="#999"/>
<rect x="476.69" y="189" width="1" height="4" fill="#999"/>
<rect x="502.16" y="189" width="1" height="4" fill="#999"/>
<rect x="527.62" y="189" width="1" height="4" fill="#999"/>
<rect x="553.10" y="189" width="1" height="4" fill="#999"/>
<rect x="578.57" y="189" width="1" height="4" fill="#999"/>
<rect x="604.04" y="189" width="1" height="4" fill="#999"/>
<rect x="629.50" y="189" width="1" height="4" fill="#999"/>
<rect x="654.98" y="189" width="1" height="4" fill="#999"/>
<rect x="680.44" y="189" width="1" height="4" fill="#999"/>
<rect x="705.91" y="189" width="1" height="4" fill="#999"/>
<rect x="731.38" y="189" width="1" height="4" fill="#999"/>
<rect x="756.86" y="189" width="1" height="4" fill="#999"/>
<rect x="782.33" y="189" width="1" height="4" fill="#999"/>
<rect x="807.79" y="189" width="1" height="4" fill="#999"/>
<rect x="833.26" y="189" width="1" height="4" fill="#999"/>
<rect x="858.74" y="189" width="1" height="4" fill="#999"/>
<rect x="884.21" y="189" width="1" height="4" fill="#999"/>
<rect x="909.67" y="189" width="1" height="4" fill="#999"/>
<rect x="935.14" y="189" width="1" height="4" fill="#999"/>
<rect x="960.62" y="189" width="1" height="4" fill="#999"/>
<rect x="986.09" y="189" width="1" height="4" fill="#999"/>
<rect x="1011.56" y="189" width="1" height="4" fill="#999"/>
<rect x="1037.03" y="189" width="1" height="4" fill="#999"/>
<rect x="1062.49" y="189" width="1" height="4" fill="#999"/>
<rect x="1087.96" y="189" width="1" height="4" fill="#999"/>
<rect x="1113.43" y="189" width="1" height="4" fill="#999"/>
<rect x="1138.90" y="189" width="1" height="4" fill="#999"/>
<rect x="1164.38" y="189" width="1" height="4" fill="#999"/>
<rect x="1189.85" y="189" width="1" height="4" fill="#999"/>
<rect x="1215.32" y="189" width="1" height="4" fill="#999"/>
<rect x="432.11" y="190.5" width="1" height="1" fill="#bbb"/>
<rect x="444.85" y="190.5" width="1" height="1" fill="#bbb"/>
<rect x="457.58" y="190.5" width="1" height="1" fill="#bbb"/>
<rect x="470.32" y="190.5" width="1" height="1" fill="#bbb"/>
<rect x="483.05" y="190.5" width="1" height="1" fill="#bbb"/>
<rect x="495.79" y="190.5" width="1" height="1" fill="#bbb"/>
<rect x="508.52" y="190.5" width="1" height="1" fill="#bbb"/>
<rect x="521.26" y="190.5" width="1" height="1" fill="#bbb"/>
<rect x="533.99" y="190.5" width="1" height="1" fill="#bbb"/>
<rect x="546.73" y="190.5" width="1" height="1" fill="#bbb"/>
<rect x="559.46" y="190.5" width="1" height="1" fill="#bbb"/>
<rect x="572.20" y="190.5" width="1" height="1" fill="#bbb"/>
<rect x="584.93" y="190.5" width="1" height="1" fill="#bbb"/>
<rect x="597.67" y="190.5" width="1" height="1" fill="#bbb"/>
<rect x="610.40" y="190.5" width="1" height="1" fill="#bbb"/>
<rect x="623.14" y="190.5" width="1" height="1" fill="#bbb"/>
<rect x="635.87" y="190.5" width="1" height="1" fill="#bbb"/>
<rect x="648.61" y="190.5" width="1" height="1" fill="#bbb"/>
<rect x="661.34" y="190.5" width="1" height="1" fill="#bbb"/>
<rect x="674.08" y="190.5" width="1" height="1" fill="#bbb"/>
<rect x="686.81" y="190.5" width="1" height="1" fill="#bbb"/>
<rect x="699.55" y="190.5" width="1" height="1" fill="#bbb"/>
<rect x="712.28" y="190.5" width="1" height="1" fill="#bbb"/>
<rect x="725.02" y="190.5" width="1" height="1" fill="#bbb"/>
<rect x="737.75" y="190.5" width="1" height="1" fill="#bbb"/>
<rect x="750.49" y="190.5" width="1" height="1" fill="#bbb"/>
<rect x="763.22" y="190.5" width="1" height="1" fill="#bbb"/>
<rect x="775.96" y="190.5" width="1" height="1" fill="#bbb"/>
<rect x="788.69" y="190.5" width="1" height="1" fill="#bbb"/>
<rect x="801.43" y="190.5" width="1" height="1" fill="#bbb"/>
<rect x="814.16" y="190.5" width="1" height="1" fill="#bbb"/>
<rect x="826.90" y="190.5" width="1" height="1" fill="#bbb"/>
<rect x="839.63" y="190.5" width="1" height="1" fill="#bbb"/>
<rect x="852.37" y="190.5" width="1" height="1" fill="#bbb"/>
<rect x="865.10" y="190.5" width="1" height="1" fill="#bbb"/>
<rect x="877.84" y="190.5" width="1" height="1" fill="#bbb"/>
<rect x="890.57" y="190.5" width="1" height="1" fill="#bbb"/>
<rect x="903.31" y="190.5" width="1" height="1" fill="#bbb"/>
<rect x="916.04" y="190.5" width="1" height="1" fill="#bbb"/>
<rect x="928.78" y="190.5" width="1" height="1" fill="#bbb"/>
<rect x="941.51" y="190.5" width="1" height="1" fill="#bbb"/>
<rect x="954.25" y="190.5" width="1" height="1" fill="#bbb"/>
<rect x="966.98" y="190.5" width="1" height="1" fill="#bbb"/>
<rect x="979.72" y="190.5" width="1" height="1" fill="#bbb"/>
<rect x="992.45" y="190.5" width="1" height="1" fill="#bbb"/>
<rect x="1005.19" y="190.5" width="1" height="1" fill="#bbb"/>
<rect x="1017.92" y="190.5" width="1" height="1" fill="#bbb"/>
<rect x="1030.66" y="190.5" width="1" height="1" fill="#bbb"/>
<rect x="1043.39" y="190.5" width="1" height="1" fill="#bbb"/>
<rect x="1056.13" y="190.5" width="1" height="1" fill="#bbb"/>
<rect x="1068.86" y="190.5" width="1" height="1" fill="#bbb"/>
<rect x="1081.60" y="190.5" width="1" height="1" fill="#bbb"/>
<rect x="1094.33" y="190.5" width="1" height="1" fill="#bbb"/>
<rect x="1107.07" y="190.5" width="1" height="1" fill="#bbb"/>
<rect x="1119.80" y="190.5" width="1" height="1" fill="#bbb"/>
<rect x="1132.54" y="190.5" width="1" height="1" fill="#bbb"/>
<rect x="1145.27" y="190.5" width="1" height="1" fill="#bbb"/>
<rect x="1158.01" y="190.5" width="1" height="1" fill="#bbb"/>
<rect x="1170.74" y="190.5" width="1" height="1" fill="#bbb"/>
<rect x="1183.48" y="190.5" width="1" height="1" fill="#bbb"/>
<rect x="1196.21" y="190.5" width="1" height="1" fill="#bbb"/>
<rect x="1208.95" y="190.5" width="1" height="1" fill="#bbb"/>
<rect x="45" y="254" width="16" height="485" fill="#ffffff"/>
<text transform="translate(57,267.27) rotate(-90)" x="0" y="0" font-size="10" fill="#6a6a6a" text-anchor="middle" font-family="Liberation Sans">9</text>
<text transform="translate(57,292.74) rotate(-90)" x="0" y="0" font-size="10" fill="#6a6a6a" text-anchor="middle" font-family="Liberation Sans">8</text>
<text transform="translate(57,318.21) rotate(-90)" x="0" y="0" font-size="10" fill="#6a6a6a" text-anchor="middle" font-family="Liberation Sans">7</text>
<text transform="translate(57,343.68) rotate(-90)" x="0" y="0" font-size="10" fill="#6a6a6a" text-anchor="middle" font-family="Liberation Sans">6</text>
<text transform="translate(57,369.15) rotate(-90)" x="0" y="0" font-size="10" fill="#6a6a6a" text-anchor="middle" font-family="Liberation Sans">5</text>
<text transform="translate(57,394.62) rotate(-90)" x="0" y="0" font-size="10" fill="#6a6a6a" text-anchor="middle" font-family="Liberation Sans">4</text>
<text transform="translate(57,420.09) rotate(-90)" x="0" y="0" font-size="10" fill="#6a6a6a" text-anchor="middle" font-family="Liberation Sans">3</text>
<text transform="translate(57,445.56) rotate(-90)" x="0" y="0" font-size="10" fill="#6a6a6a" text-anchor="middle" font-family="Liberation Sans">2</text>
<text transform="translate(57,471.03) rotate(-90)" x="0" y="0" font-size="10" fill="#6a6a6a" text-anchor="middle" font-family="Liberation Sans">1</text>
<text transform="translate(57,496.50) rotate(-90)" x="0" y="0" font-size="10" fill="#6a6a6a" text-anchor="middle" font-family="Liberation Sans">0</text>
<text transform="translate(57,521.97) rotate(-90)" x="0" y="0" font-size="10" fill="#6a6a6a" text-anchor="middle" font-family="Liberation Sans">1</text>
<text transform="translate(57,547.44) rotate(-90)" x="0" y="0" font-size="10" fill="#6a6a6a" text-anchor="middle" font-family="Liberation Sans">2</text>
<text transform="translate(57,572.91) rotate(-90)" x="0" y="0" font-size="10" fill="#6a6a6a" text-anchor="middle" font-family="Liberation Sans">3</text>
<text transform="translate(57,598.38) rotate(-90)" x="0" y="0" font-size="10" fill="#6a6a6a" text-anchor="middle" font-family="Liberation Sans">4</text>
<text transform="translate(57,623.85) rotate(-90)" x="0" y="0" font-size="10" fill="#6a6a6a" text-anchor="middle" font-family="Liberation Sans">5</text>
<text transform="translate(57,649.32) rotate(-90)" x="0" y="0" font-size="10" fill="#6a6a6a" text-anchor="middle" font-family="Liberation Sans">6</text>
<text transform="translate(57,674.79) rotate(-90)" x="0" y="0" font-size="10" fill="#6a6a6a" text-anchor="middle" font-family="Liberation Sans">7</text>
<text transform="translate(57,700.26) rotate(-90)" x="0" y="0" font-size="10" fill="#6a6a6a" text-anchor="middle" font-family="Liberation Sans">8</text>
<text transform="translate(57,725.73) rotate(-90)" x="0" y="0" font-size="10" fill="#6a6a6a" text-anchor="middle" font-family="Liberation Sans">9</text>
<rect x="51" y="254.04" width="4" height="1" fill="#999"/>
<rect x="51" y="279.50" width="4" height="1" fill="#999"/>
<rect x="51" y="304.98" width="4" height="1" fill="#999"/>
<rect x="51" y="330.44" width="4" height="1" fill="#999"/>
<rect x="51" y="355.92" width="4" height="1" fill="#999"/>
<rect x="51" y="381.38" width="4" height="1" fill="#999"/>
<rect x="51" y="406.86" width="4" height="1" fill="#999"/>
<rect x="51" y="432.32" width="4" height="1" fill="#999"/>
<rect x="51" y="457.80" width="4" height="1" fill="#999"/>
<rect x="51" y="483.26" width="4" height="1" fill="#999"/>
<rect x="51" y="508.74" width="4" height="1" fill="#999"/>
<rect x="51" y="534.21" width="4" height="1" fill="#999"/>
<rect x="51" y="559.67" width="4" height="1" fill="#999"/>
<rect x="51" y="585.14" width="4" height="1" fill="#999"/>
<rect x="51" y="610.62" width="4" height="1" fill="#999"/>
<rect x="51" y="636.09" width="4" height="1" fill="#999"/>
<rect x="51" y="661.56" width="4" height="1" fill="#999"/>
<rect x="51" y="687.02" width="4" height="1" fill="#999"/>
<rect x="51" y="712.50" width="4" height="1" fill="#999"/>
<rect x="51" y="737.96" width="4" height="1" fill="#999"/>
<rect x="414" y="254" width="864" height="485" fill="#dcdddc"/>
<rect x="415" y="255" width="862" height="483" fill="#ffffff"/>
<line x1="702.5" y1="203" x2="702.5" y2="769" stroke="#a6a6a6" stroke-width="1" stroke-dasharray="3.5,3.5"/>
<line x1="990.5" y1="203" x2="990.5" y2="769" stroke="#a6a6a6" stroke-width="1" stroke-dasharray="3.5,3.5"/>
<line x1="702.5" y1="769" x2="702.5" y2="792" stroke="#c9c9c9" stroke-width="1" stroke-dasharray="1,2"/>
<line x1="990.5" y1="769" x2="990.5" y2="792" stroke="#c9c9c9" stroke-width="1" stroke-dasharray="1,2"/>
<line x1="291" y1="415.5" x2="1376" y2="415.5" stroke="#a6a6a6" stroke-width="1" stroke-dasharray="5,2"/>
<line x1="225" y1="415.5" x2="291" y2="415.5" stroke="#d6d6d6" stroke-width="1" stroke-dasharray="2,2"/>
<line x1="1376" y1="415.5" x2="1440" y2="415.5" stroke="#d6d6d6" stroke-width="1" stroke-dasharray="2,2"/>
<line x1="291" y1="577.5" x2="1376" y2="577.5" stroke="#a6a6a6" stroke-width="1" stroke-dasharray="5,2"/>
<line x1="225" y1="577.5" x2="291" y2="577.5" stroke="#d6d6d6" stroke-width="1" stroke-dasharray="2,2"/>
<line x1="1376" y1="577.5" x2="1440" y2="577.5" stroke="#d6d6d6" stroke-width="1" stroke-dasharray="2,2"/>
<text x="52.59" y="814.20" font-size="16.4" fill="#6b6b6b" textLength="113.54" lengthAdjust="spacingAndGlyphs" font-family="Liberation Sans" font-weight="normal" >Tap&#160;to&#160;add&#160;notes</text>
<rect x="0" y="828" width="1641" height="31" fill="#f4f4f4"/>
<text x="7.43" y="849.30" font-size="11.5" fill="#555" textLength="64.30" lengthAdjust="spacingAndGlyphs" font-family="Liberation Sans" font-weight="normal" >Slide&#160;58&#160;of&#160;58</text>
<rect x="90.8" y="835.5" width="7.5" height="14" fill="none" stroke="#999" stroke-width="1"/>
<rect x="98.3" y="835.5" width="8.2" height="14" fill="none" stroke="#999" stroke-width="1"/>
<path d="M100.5,839 L104.5,843 M104.5,839 L100.5,843" stroke="#555" stroke-width="1"/>
<text x="122.76" y="849.30" font-size="11.5" fill="#555" textLength="106.89" lengthAdjust="spacingAndGlyphs" font-family="Liberation Sans" font-weight="normal" >English&#160;(United&#160;States)</text>
<rect x="1240.5" y="841" width="13.5" height="10" fill="#ddd" stroke="#999" stroke-width="0.8"/>
<path d="M1242,844 H1252 M1242,847 H1252" stroke="#999" stroke-width="0.8"/>
<path d="M1245,841 L1247.2,837.5 L1249.4,841 Z" fill="#444"/>
<text x="1258.52" y="849.00" font-size="11.5" fill="#555" textLength="28.90" lengthAdjust="spacingAndGlyphs" font-family="Liberation Sans" font-weight="normal" >Notes</text>
<rect x="1303.5" y="828.3" width="34.2" height="30.7" fill="#c8c8c8"/>
<rect x="1311.5" y="835.8" width="18.5" height="16.2" fill="none" stroke="#888" stroke-width="1"/>
<path d="M1316,836 V852 M1316,846 H1330 M1321,836 V842 M1322,841 H1327" fill="none" stroke="#888" stroke-width="1"/>
<rect x="1344.5" y="836.5" width="7.6" height="6.6" fill="none" stroke="#999" stroke-width="1"/>
<rect x="1354" y="836.5" width="7.6" height="6.6" fill="none" stroke="#999" stroke-width="1"/>
<rect x="1344.5" y="845.5" width="7.6" height="6.6" fill="none" stroke="#999" stroke-width="1"/>
<rect x="1354" y="845.5" width="7.6" height="6.6" fill="none" stroke="#999" stroke-width="1"/>
<path d="M1379,837 H1388 V852 H1379 Z M1388,837 H1397 V852 H1388" fill="#e4e4e4" stroke="#999" stroke-width="1"/>
<rect x="1413" y="836.2" width="18" height="2.2" fill="#666"/>
<path d="M1415,837.5 V847 H1429.5 V837.5 M1422.2,847 V852 M1419,841.5 H1426" fill="none" stroke="#888" stroke-width="1.1"/>
<rect x="1442.2" y="843.5" width="7.8" height="2" fill="#777"/>
<rect x="1453.8" y="843.4" width="102.2" height="2.8" fill="#d6d6d6"/>
<rect x="1505" y="841" width="1" height="8" fill="#c4c4c4"/>
<rect x="1484.6" y="838.2" width="5.2" height="12.2" fill="#777"/>
<path d="M1559.2,844.5 H1567.6 M1563.4,840.3 V848.7" stroke="#777" stroke-width="2"/>
<text x="1577.38" y="849.10" font-size="11.5" fill="#666" textLength="20.80" lengthAdjust="spacingAndGlyphs" font-family="Liberation Sans" font-weight="normal" >66%</text>
<rect x="1619" y="837" width="13.5" height="13.4" fill="#eee" stroke="#ddd" stroke-width="0.8"/>
<path d="M1622,840 L1629.5,847.5 M1629.5,840 L1622,847.5" stroke="#999" stroke-width="0.8"/>
<rect x="1219.7" y="74.7" width="96" height="140.5" fill="#f4f4f4" stroke="#111" stroke-width="2.6"/>
<line x1="1260.3" y1="89.3" x2="1260.3" y2="142.7" stroke="#1e1e1e" stroke-width="2"/>
<line x1="1279" y1="89.3" x2="1279" y2="142.7" stroke="#1e1e1e" stroke-width="2"/>
<line x1="1242" y1="107.3" x2="1296" y2="107.3" stroke="#1e1e1e" stroke-width="2"/>
<line x1="1242" y1="124.7" x2="1296" y2="124.7" stroke="#1e1e1e" stroke-width="2"/>
<circle cx="1260.3" cy="107.3" r="3.4" fill="#f7c800" stroke="#333" stroke-width="0.8"/>
<circle cx="1260.3" cy="124.7" r="3.4" fill="#f7c800" stroke="#333" stroke-width="0.8"/>
<circle cx="1279" cy="107.3" r="3.4" fill="#f7c800" stroke="#333" stroke-width="0.8"/>
<circle cx="1279" cy="124.7" r="3.4" fill="#f7c800" stroke="#333" stroke-width="0.8"/>
<text x="1236.39" y="174.60" font-size="19.8" fill="#7a7a7a" textLength="63.88" lengthAdjust="spacingAndGlyphs" font-family="Liberation Sans" font-weight="normal" >Rule&#160;of</text>
<text x="1241.61" y="199.10" font-size="19.8" fill="#7a7a7a" textLength="54.75" lengthAdjust="spacingAndGlyphs" font-family="Liberation Sans" font-weight="normal" >Thirds</text>
</svg></body></html>
